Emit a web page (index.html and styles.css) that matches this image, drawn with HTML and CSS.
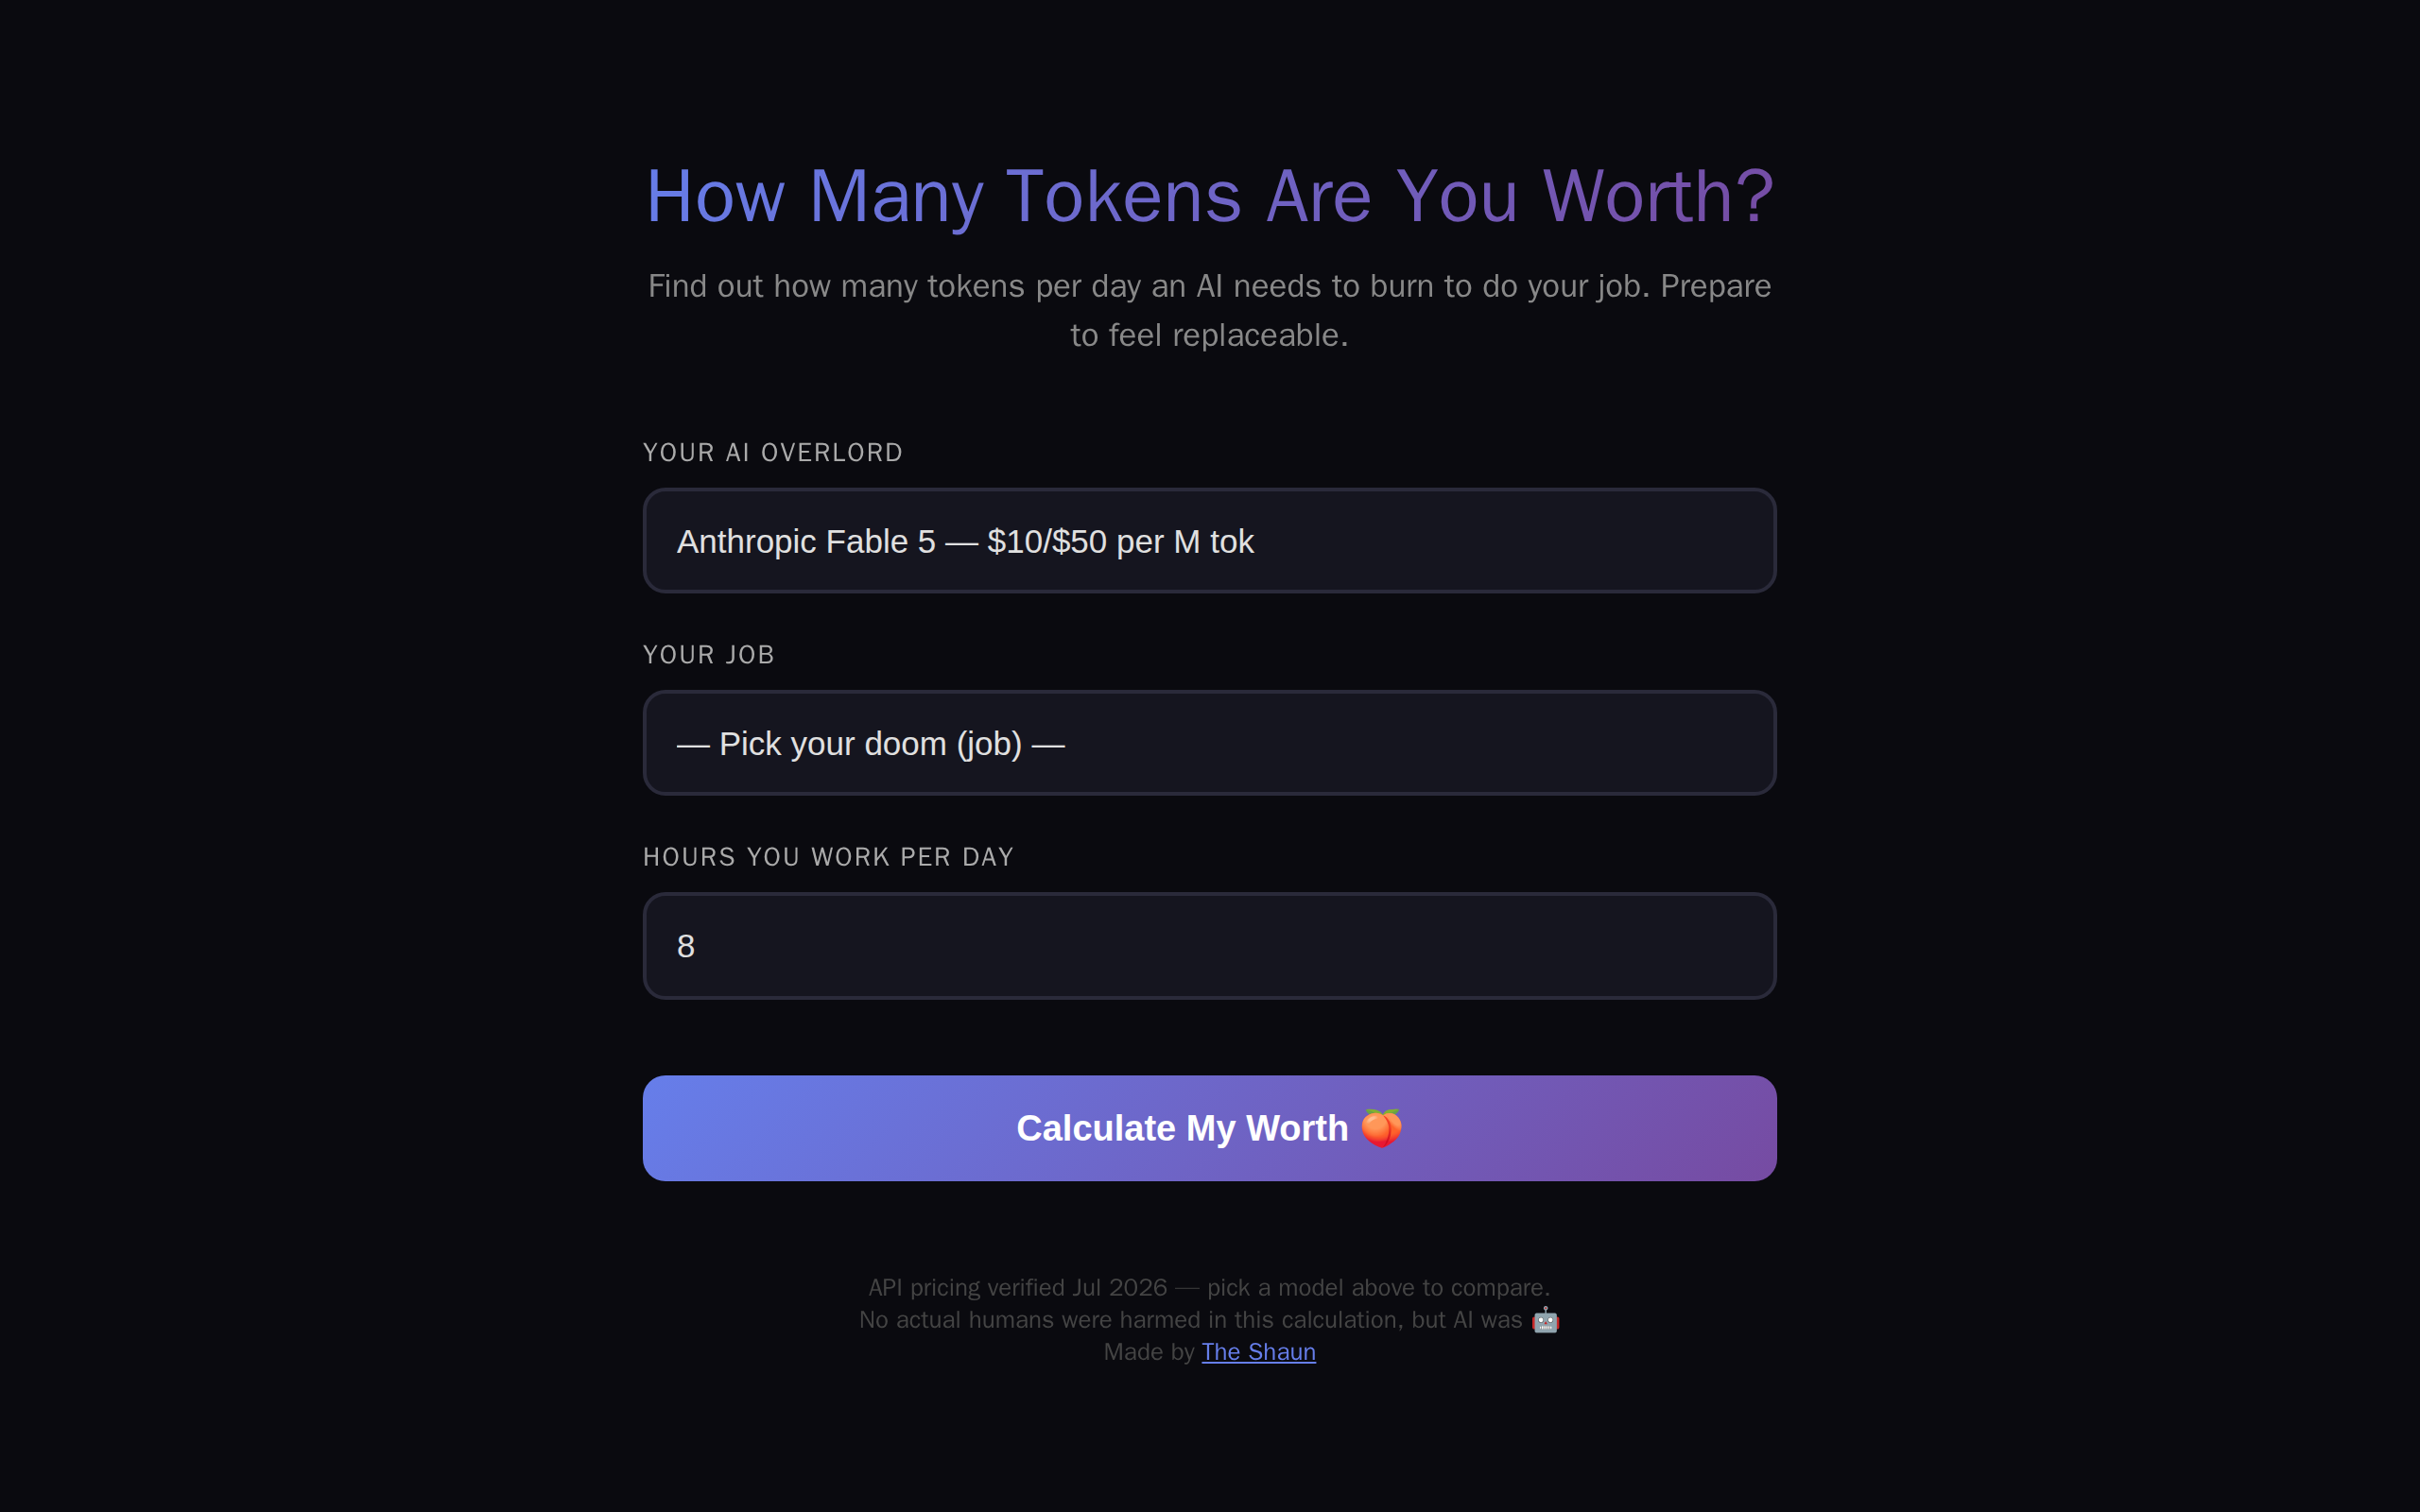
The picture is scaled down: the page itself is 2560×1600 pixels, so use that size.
FILE: index.html
```html
<!DOCTYPE html>
<html lang="en">
<head>
<meta charset="utf-8">
<meta name="viewport" content="width=device-width, initial-scale=1">
<title>How Many Tokens Are You Worth?</title>
<link rel="stylesheet" href="styles.css">
</head>
<body>
<main class="page">
  <h1 class="title">How Many Tokens Are You Worth?</h1>
  <p class="subtitle">Find out how many tokens per day an AI needs to burn to do your job. Prepare to feel replaceable.</p>
  <form class="form">
    <div class="field">
      <label class="label" for="model">Your AI Overlord</label>
      <select class="control" id="model"><option>Anthropic Fable 5 — $10/$50 per M tok</option></select>
    </div>
    <div class="field">
      <label class="label" for="job">Your Job</label>
      <select class="control" id="job"><option>— Pick your doom (job) —</option></select>
    </div>
    <div class="field">
      <label class="label" for="hours">Hours you work per day</label>
      <input class="control control-input" id="hours" type="number" min="1" max="24" value="8">
    </div>
    <button class="submit" type="button">Calculate My Worth 🍑</button>
  </form>
  <footer class="footer">
    <p>API pricing verified Jul 2026 — pick a model above to compare.</p>
    <p>No actual humans were harmed in this calculation, but AI was 🤖</p>
    <p>Made by <a class="link" href="#">The Shaun</a></p>
  </footer>
</main>
</body>
</html>
```
FILE: styles.css
```css
* {
  box-sizing: border-box;
}

body {
  margin: 0;
  min-height: 100vh;
  background: #0a0a0f;
  color: #e0e0e0;
  font-family: "WenQuanYi Zen Hei", "Libre Franklin", "Liberation Sans", sans-serif;
}

.page {
  max-width: 1280px;
  margin: 0 auto;
  padding: 160px 40px;
}

.title {
  margin: 0 0 20px;
  background: linear-gradient(135deg, #667eea, #764ba2);
  background-clip: text;
  -webkit-background-clip: text;
  color: transparent;
  font-size: 80px;
  font-weight: 400;
  line-height: 96px;
  text-align: center;
}

.subtitle {
  margin: 0 0 80px;
  color: #888;
  font-size: 35px;
  line-height: 52px;
  text-align: center;
}

.field {
  margin-bottom: 46px;
}

.label {
  display: block;
  margin-bottom: 18px;
  color: #aaa;
  font-size: 28px;
  letter-spacing: 2px;
  line-height: 38px;
  text-transform: uppercase;
}

.control {
  display: block;
  width: 100%;
  height: 112px;
  padding: 0 32px;
  border: 4px solid #2a2a3a;
  border-radius: 24px;
  background: #15151f;
  color: #e0e0e0;
  font-family: "Liberation Sans", sans-serif;
  font-size: 35px;
  appearance: none;
}

.control-input {
  height: 114px;
  appearance: textfield;
}

.submit {
  display: block;
  width: 100%;
  height: 112px;
  margin-top: 80px;
  border: 0;
  border-radius: 24px;
  background: linear-gradient(135deg, #667eea, #764ba2);
  color: #fff;
  font-family: "Liberation Sans", sans-serif;
  font-size: 38px;
  font-weight: 700;
}

.footer {
  margin-top: 96px;
  color: #444;
  font-size: 26px;
  line-height: 34px;
  text-align: center;
}

.footer p {
  margin: 0;
}

.link {
  color: #667eea;
}
```
